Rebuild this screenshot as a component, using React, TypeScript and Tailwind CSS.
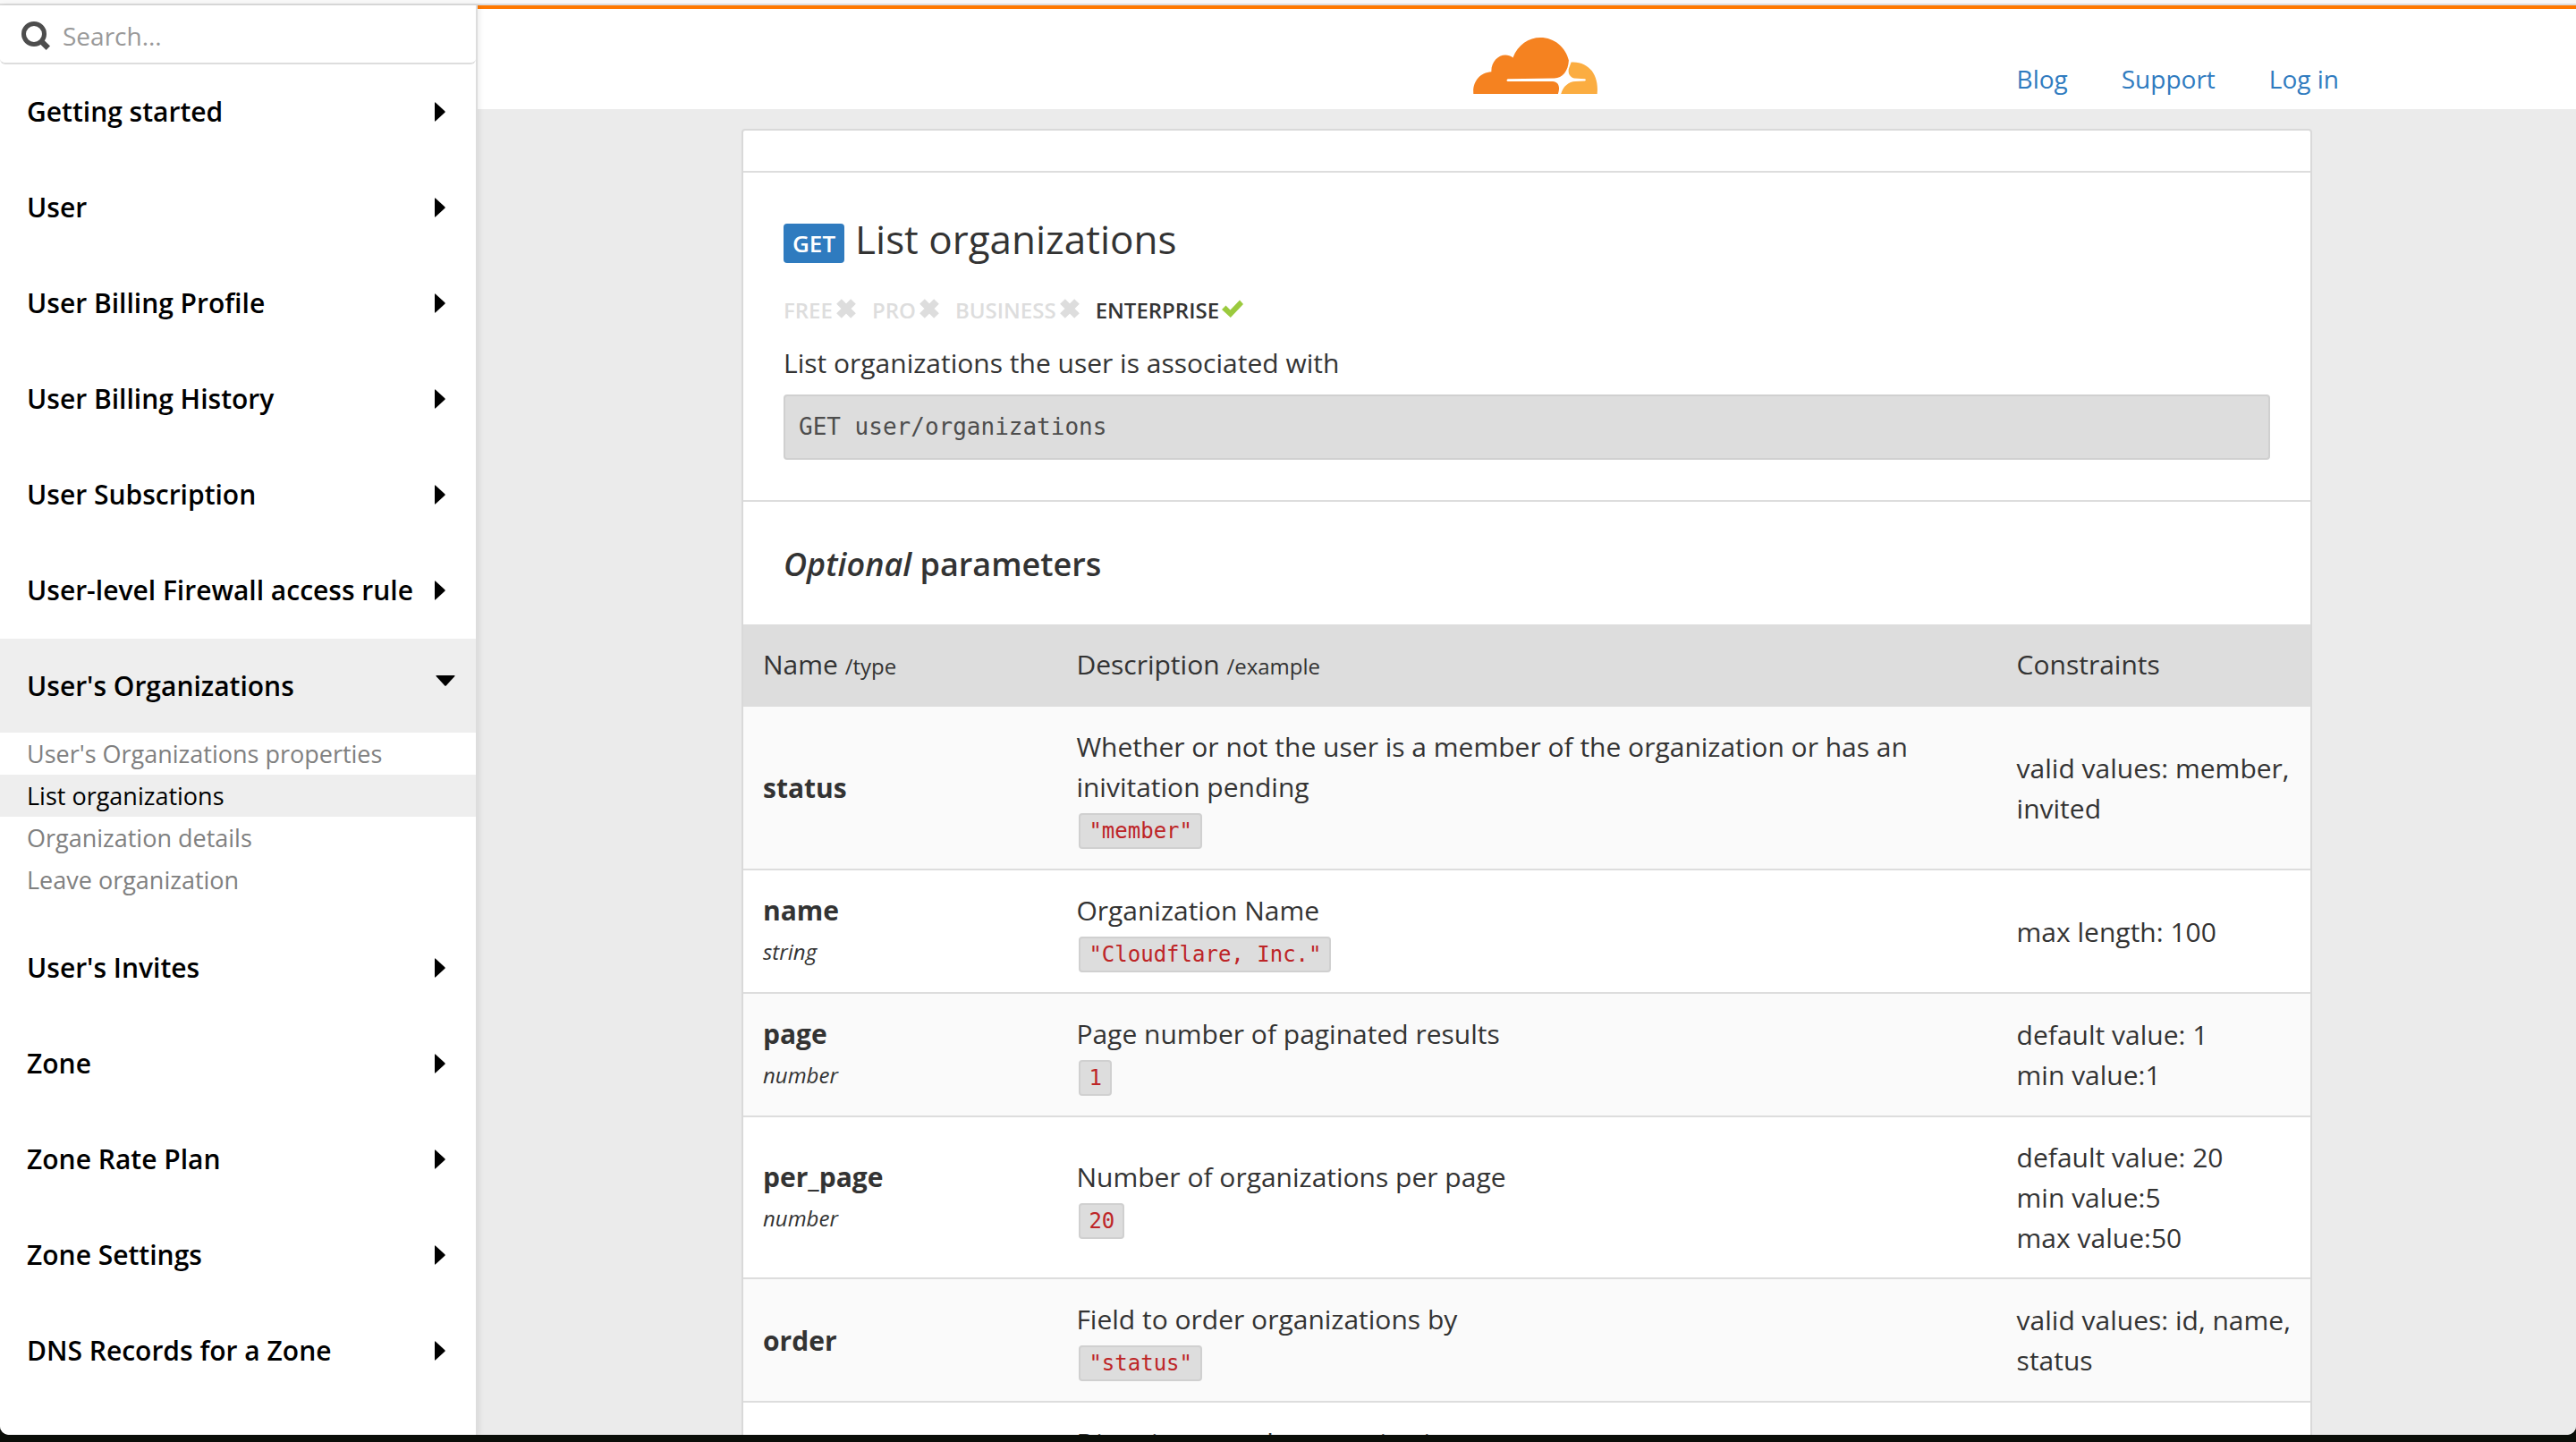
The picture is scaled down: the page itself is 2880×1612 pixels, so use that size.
import React from "react";

type Param = { name: string; type?: string; desc: string; example?: string; constraints: string[] };

const before = ["Getting started", "User", "User Billing Profile", "User Billing History", "User Subscription", "User-level Firewall access rule"];
const after = ["User's Invites", "Zone", "Zone Rate Plan", "Zone Settings", "DNS Records for a Zone"];
const subItems = ["User's Organizations properties", "List organizations", "Organization details", "Leave organization"];

const params: Param[] = [
  { name: "status", desc: "Whether or not the user is a member of the organization or has an inivitation pending", example: '"member"', constraints: ["valid values: member, invited"] },
  { name: "name", type: "string", desc: "Organization Name", example: '"Cloudflare, Inc."', constraints: ["max length: 100"] },
  { name: "page", type: "number", desc: "Page number of paginated results", example: "1", constraints: ["default value: 1", "min value:1"] },
  { name: "per_page", type: "number", desc: "Number of organizations per page", example: "20", constraints: ["default value: 20", "min value:5", "max value:50"] },
  { name: "order", desc: "Field to order organizations by", example: '"status"', constraints: ["valid values: id, name, status"] },
  { name: "direction", desc: "Direction to order organizations", example: '"desc"', constraints: ["valid values: asc, desc"] },
];

function SearchIcon() {
  return (
    <svg viewBox="0 0 32 32" className="h-8 w-8 shrink-0" aria-hidden="true">
      <circle cx="14" cy="14" r="11.5" fill="none" stroke="#4d4d4d" strokeWidth="5" />
      <path d="M21.5 21.5L29.8 29.8" stroke="#4d4d4d" strokeWidth="6.2" />
    </svg>
  );
}

function Logo() {
  return (
    <svg viewBox="0 0 416 188" className="h-[63px] w-[139px]" role="img" aria-label="Cloudflare">
      <path
        fill="#f58220"
        d="M1 188C-3 148 22 116 61 114C59 72 101 43 133 67C150 24 186 0 225 0C272 0 309 32 320 76C318 112 299 135 272 136L116 138C111 140 111 145 116 146L266 146C286 147 292 165 284 188Z"
      />
      <path
        fill="#fbad41"
        d="M328 82C384 78 422 122 415 188L294 188C301 162 320 147 342 146L374 145C378 143 378 140 374 138L338 136C322 132 317 118 320 104Z"
      />
    </svg>
  );
}

function RightArrow() {
  return (
    <svg viewBox="0 0 12 22" className="h-[22px] w-3 shrink-0" aria-hidden="true">
      <path d="M0 0.5Q0 0 1 0.8L11.4 10.2Q12 11 11.4 11.8L1 21.2Q0 22 0 21.5Z" />
    </svg>
  );
}

function DownArrow() {
  return (
    <svg viewBox="0 0 22 12" className="mb-3 h-3 w-[22px] shrink-0" aria-hidden="true">
      <path d="M1 0H21Q22 0 21.4 1L11.8 11.4Q11 12 10.2 11.4L0.6 1Q0 0 1 0Z" />
    </svg>
  );
}

function CrossIcon() {
  return (
    <svg viewBox="0 0 22 22" className="mb-1 h-[22px] w-[22px]" aria-hidden="true">
      <path d="M3 3L19 19M19 3L3 19" stroke="#ddd" strokeWidth="8" />
    </svg>
  );
}

function CheckIcon() {
  return (
    <svg viewBox="0 0 24 20" className="mb-1 h-5 w-6" aria-hidden="true">
      <path d="M0 11L4.5 6.5L9.5 11.5L20 0.5L24 5L9.8 20Z" fill="#9bca3e" />
    </svg>
  );
}

function Plan({ label, on = false }: { label: string; on?: boolean }) {
  return (
    <li className={on ? "flex items-center gap-[3px] text-[#333]" : "flex items-center gap-1 text-[#ddd]"}>
      {label}
      {on ? <CheckIcon /> : <CrossIcon />}
    </li>
  );
}

function NavRow({ label }: { label: string }) {
  return (
    <li>
      <button type="button" className="flex h-[105px] w-full items-center justify-between pl-[30px] pr-[34px] text-left font-semibold">
        <span className="whitespace-nowrap">{label}</span>
        <RightArrow />
      </button>
    </li>
  );
}

function Sidebar() {
  return (
    <aside className="z-10 flex w-[534px] shrink-0 flex-col border-r-2 border-[#ddd] bg-white text-black shadow-[2px_0_6px_rgba(0,0,0,0.08)]">
      <label className="flex h-[66px] shrink-0 items-center gap-3.5 rounded-b-md border-b-2 border-[#ddd] pl-6 pt-1">
        <SearchIcon />
        <input
          type="search"
          aria-label="Search"
          placeholder="Search..."
          className="min-w-0 flex-1 bg-transparent text-[28px] leading-10 outline-none placeholder:text-[#999]"
        />
      </label>
      <ul className="flex flex-col gap-0.5">
        {before.map((l) => (
          <NavRow key={l} label={l} />
        ))}
        <li>
          <button type="button" aria-expanded="true" className="flex h-[105px] w-full items-center justify-between bg-[#eee] pl-[30px] pr-[23px] text-left font-semibold">
            User's Organizations
            <DownArrow />
          </button>
          <ul className="pb-5 text-[27px] leading-[47px]">
            {subItems.map((l) => (
              <li key={l}>
                <a
                  href="#"
                  className={l === "List organizations" ? "block bg-[#eee] pl-[30px] text-black" : "block pl-[30px] text-[#808080]"}
                >
                  {l}
                </a>
              </li>
            ))}
          </ul>
        </li>
        {after.map((l) => (
          <NavRow key={l} label={l} />
        ))}
      </ul>
    </aside>
  );
}

function ParamTable() {
  return (
    <table className="w-full table-fixed border-collapse text-left">
      <thead>
        <tr className="border-b-2 border-[#ddd] bg-[#ddd]">
          <th className="w-1/5 px-[22px] pb-[23px] pt-[22px] font-normal">
            Name <small className="text-2xl leading-none">/type</small>
          </th>
          <th className="w-3/5 px-[22px] pb-[23px] pt-[22px] font-normal">
            Description <small className="text-2xl leading-none">/example</small>
          </th>
          <th className="w-1/5 px-[22px] pb-[23px] pt-[22px] font-normal">Constraints</th>
        </tr>
      </thead>
      <tbody>
        {params.map((p) => (
          <tr key={p.name} className="border-b-2 border-[#ddd] odd:bg-[#fafafa]">
            <td className="px-[22px] py-[22px] align-middle">
              <div className="font-bold">{p.name}</div>
              {p.type && <div className="text-2xl leading-[47px] italic">{p.type}</div>}
            </td>
            <td className="px-[22px] py-[22px] align-middle">
              <div>{p.desc}</div>
              {p.example && (
                <div className="flex pl-[3px] pt-[7px]">
                  <code className="rounded border-2 border-[#d0d0d0] bg-[#ddd] px-[9px] font-['DejaVu_Sans_Mono',monospace] text-2xl leading-9 text-[#bd2527]">
                    {p.example}
                  </code>
                </div>
              )}
            </td>
            <td className="py-[22px] pl-[22px] pr-4 align-middle">
              {p.constraints.map((c) => (
                <div key={c}>{c}</div>
              ))}
            </td>
          </tr>
        ))}
      </tbody>
    </table>
  );
}

export default function App() {
  return (
    <div className="h-screen overflow-hidden bg-[#0b0e09] pb-2 font-['Open_Sans',sans-serif] text-[30px] leading-[45px] text-[#333]">
      <div className="flex h-full flex-col overflow-hidden rounded-b-[10px] bg-white">
        <div className="h-1.5 shrink-0 border-b-2 border-[#ddd] bg-[#f8f8f8]" />
        <div className="flex min-h-0 flex-1">
          <Sidebar />
          <div className="flex min-w-0 flex-1 flex-col bg-[#ebebeb]">
            <header className="shrink-0 border-t-4 border-[#ff7900] bg-white">
              <div className="mx-auto grid h-28 max-w-[1816px] grid-cols-[1fr_auto_1fr] items-end pb-[17px] pl-[18px]">
                <a href="#" className="col-start-2">
                  <Logo />
                </a>
                <nav className="flex justify-end gap-[60px] text-[28px] leading-[34px] text-[#2f7bbf]">
                  <a href="#">Blog</a>
                  <a href="#">Support</a>
                  <a href="#">Log in</a>
                </nav>
              </div>
            </header>
            <main className="min-h-0 flex-1 overflow-hidden pt-[22px]">
              <article className="mx-auto max-w-[1756px] rounded-t border-2 border-[#d9d9d9] bg-white">
                <div className="h-[47px] border-b-2 border-[#ddd]" />
                <section className="border-b-2 border-[#ddd] px-[45px] pb-[45px] pt-[42px]">
                  <h1 className="flex items-center gap-3 text-[44px] leading-[64px]">
                    <span className="mt-2.5 rounded bg-[#2f7bbf] px-2.5 text-[26px] leading-[44px] font-semibold text-white">GET</span>
                    List organizations
                  </h1>
                  <ul className="mt-8 flex gap-[18px] text-2xl font-semibold">
                    <Plan label="FREE" />
                    <Plan label="PRO" />
                    <Plan label="BUSINESS" />
                    <Plan label="ENTERPRISE" on />
                  </ul>
                  <p className="mt-5">List organizations the user is associated with</p>
                  <pre className="mt-[13px] rounded border-2 border-[#d0d0d0] bg-[#ddd] px-[15px] py-3 font-['DejaVu_Sans_Mono',monospace] text-[26px] text-[#4d4d4d]">
                    GET user/organizations
                  </pre>
                </section>
                <h2 className="px-[45px] pb-[47px] pt-[50px] text-4xl font-semibold">
                  <em>Optional</em> parameters
                </h2>
                <ParamTable />
              </article>
            </main>
          </div>
        </div>
      </div>
    </div>
  );
}
